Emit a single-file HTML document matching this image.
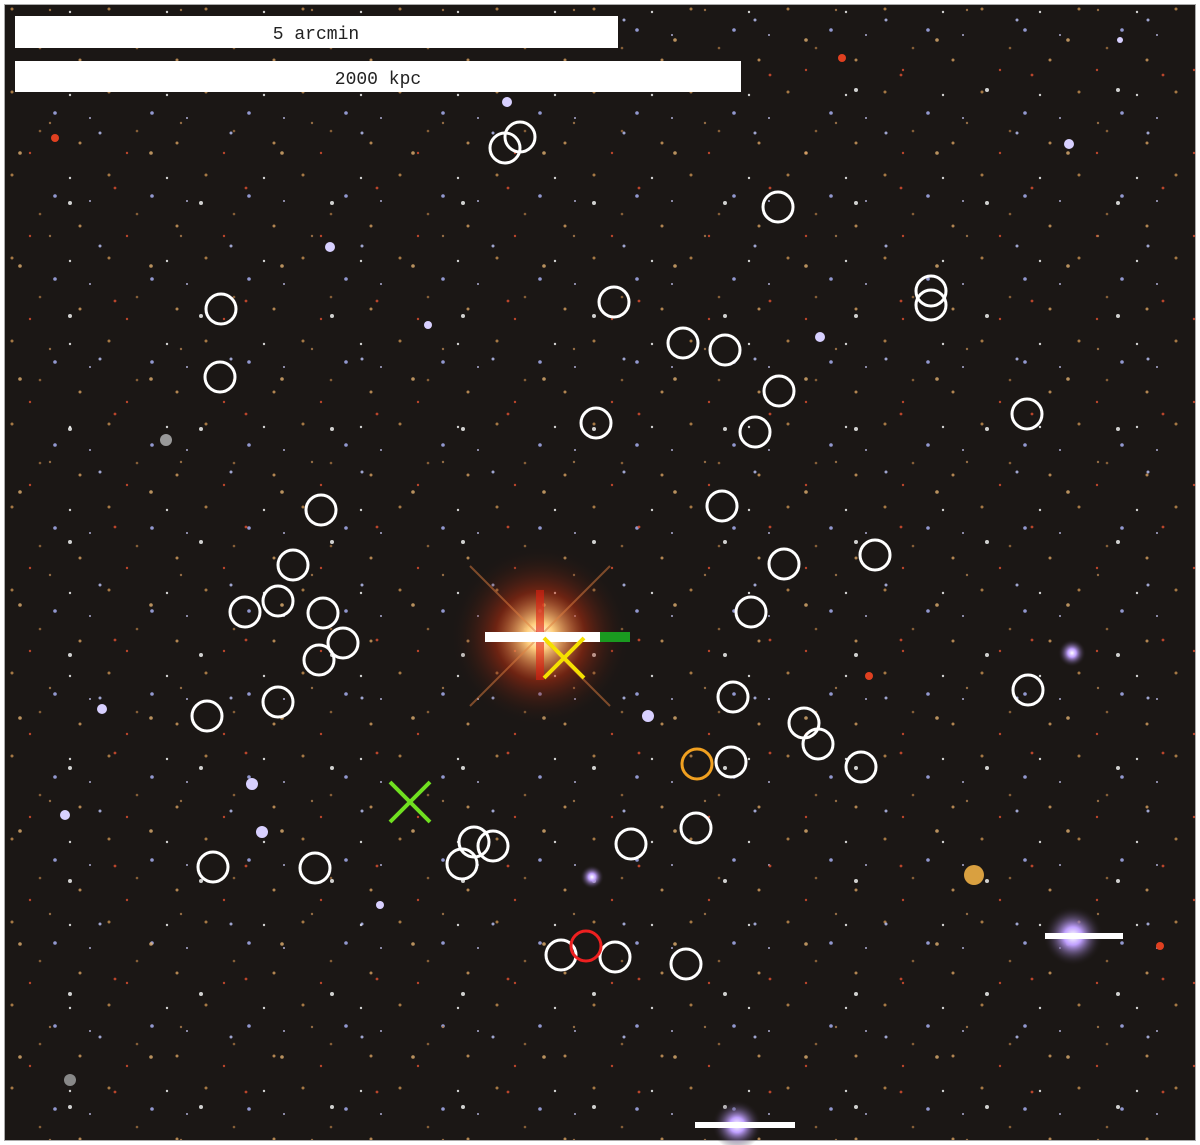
<!DOCTYPE html>
<html><head><meta charset="utf-8"><style>
html,body{margin:0;padding:0;background:#fff;width:1200px;height:1145px;overflow:hidden}
svg{position:absolute;left:0;top:0}
</style></head><body>
<svg width="1200" height="1145" viewBox="0 0 1200 1145" xmlns="http://www.w3.org/2000/svg">
<defs>
<radialGradient id="glow"><stop offset="0" stop-color="#fff"/><stop offset="0.15" stop-color="#ffd080"/><stop offset="0.5" stop-color="#c03010" stop-opacity="0.5"/><stop offset="1" stop-color="#1a1614" stop-opacity="0"/></radialGradient>
<radialGradient id="g2"><stop offset="0" stop-color="#fff"/><stop offset="0.3" stop-color="#c0a0ff"/><stop offset="1" stop-color="#1a1614" stop-opacity="0"/></radialGradient>
<pattern id="p1" width="97" height="83" patternUnits="userSpaceOnUse">
<circle cx="12" cy="9" r="1.5" fill="#c89050"/><circle cx="55" cy="30" r="1.8" fill="#b0b8ff"/><circle cx="80" cy="60" r="1.5" fill="#d8a060"/><circle cx="30" cy="70" r="1.2" fill="#e05030"/><circle cx="70" cy="12" r="1.2" fill="#fff"/><circle cx="40" cy="48" r="1.3" fill="#a07040"/><circle cx="90" cy="35" r="1" fill="#d0d0ff"/>
</pattern>
<pattern id="p2" width="131" height="113" patternUnits="userSpaceOnUse">
<circle cx="20" cy="40" r="1.8" fill="#e0b070"/><circle cx="100" cy="20" r="1.5" fill="#c0c8ff"/><circle cx="70" cy="90" r="2" fill="#ffffff"/><circle cx="115" cy="75" r="1.4" fill="#e05030"/><circle cx="50" cy="10" r="1.2" fill="#b08050"/>
</pattern>
</defs>
<rect x="4" y="4" width="1192" height="1137" fill="#aaa"/>
<rect x="5" y="5" width="1190" height="1135" fill="#1b1715"/>
<rect x="5" y="5" width="1190" height="1135" fill="url(#p1)" opacity="0.8"/>
<rect x="5" y="5" width="1190" height="1135" fill="url(#p2)" opacity="0.8"/>
<circle cx="540" cy="636" r="90" fill="url(#glow)"/>
<path d="M470 566L610 706M610 566L470 706" stroke="#e08040" stroke-width="2" opacity="0.5"/>
<rect x="536" y="590" width="8" height="90" fill="#e02010" opacity="0.6"/>
<rect x="485" y="632" width="145" height="10" fill="#fff"/>
<rect x="600" y="632" width="30" height="10" fill="#1a9a20"/>
<circle cx="1073" cy="936" r="30" fill="url(#g2)"/>
<rect x="1045" y="933" width="78" height="6" fill="#fff"/>
<circle cx="737" cy="1125" r="25" fill="url(#g2)"/>
<rect x="695" y="1122" width="100" height="6" fill="#fff"/>
<circle cx="1072" cy="653" r="14" fill="url(#g2)"/>
<circle cx="592" cy="877" r="12" fill="url(#g2)"/>
<circle cx="974" cy="875" r="10" fill="#d9a040"/>
<g fill="#d8d0ff">
<circle cx="507" cy="102" r="5"/><circle cx="55" cy="138" r="4" fill="#e04020"/><circle cx="1069" cy="144" r="5"/><circle cx="820" cy="337" r="5"/><circle cx="648" cy="716" r="6"/><circle cx="102" cy="709" r="5"/><circle cx="252" cy="784" r="6"/><circle cx="262" cy="832" r="6"/><circle cx="65" cy="815" r="5"/><circle cx="869" cy="676" r="4" fill="#e04020"/><circle cx="842" cy="58" r="4" fill="#e04020"/><circle cx="166" cy="440" r="6" fill="#999"/><circle cx="1160" cy="946" r="4" fill="#e04020"/><circle cx="70" cy="1080" r="6" fill="#888"/><circle cx="330" cy="247" r="5"/><circle cx="428" cy="325" r="4"/><circle cx="1120" cy="40" r="3"/><circle cx="380" cy="905" r="4"/>
</g>
<rect x="15" y="16" width="603" height="32" fill="#fff"/>
<rect x="15" y="61" width="726" height="31" fill="#fff"/>
<text x="316" y="39" font-family="Liberation Mono, monospace" font-size="18" text-anchor="middle" fill="#222">5 arcmin</text>
<text x="378" y="84" font-family="Liberation Mono, monospace" font-size="18" text-anchor="middle" fill="#222">2000 kpc</text>
<g fill="none" stroke="#fff" stroke-width="3">
<circle cx="505" cy="148" r="15"/><circle cx="520" cy="137" r="15"/><circle cx="778" cy="207" r="15"/><circle cx="221" cy="309" r="15"/><circle cx="614" cy="302" r="15"/><circle cx="931" cy="291" r="15"/><circle cx="931" cy="305" r="15"/><circle cx="683" cy="343" r="15"/><circle cx="725" cy="350" r="15"/><circle cx="220" cy="377" r="15"/><circle cx="779" cy="391" r="15"/><circle cx="1027" cy="414" r="15"/><circle cx="596" cy="423" r="15"/><circle cx="755" cy="432" r="15"/><circle cx="321" cy="510" r="15"/><circle cx="722" cy="506" r="15"/><circle cx="875" cy="555" r="15"/><circle cx="784" cy="564" r="15"/><circle cx="293" cy="565" r="15"/><circle cx="278" cy="601" r="15"/><circle cx="245" cy="612" r="15"/><circle cx="323" cy="613" r="15"/><circle cx="343" cy="643" r="15"/><circle cx="319" cy="660" r="15"/><circle cx="751" cy="612" r="15"/><circle cx="1028" cy="690" r="15"/><circle cx="733" cy="697" r="15"/><circle cx="278" cy="702" r="15"/><circle cx="207" cy="716" r="15"/><circle cx="804" cy="723" r="15"/><circle cx="818" cy="744" r="15"/><circle cx="731" cy="762" r="15"/><circle cx="861" cy="767" r="15"/><circle cx="696" cy="828" r="15"/><circle cx="631" cy="844" r="15"/><circle cx="474" cy="842" r="15"/><circle cx="493" cy="846" r="15"/><circle cx="462" cy="864" r="15"/><circle cx="213" cy="867" r="15"/><circle cx="315" cy="868" r="15"/><circle cx="561" cy="955" r="15"/><circle cx="615" cy="957" r="15"/><circle cx="686" cy="964" r="15"/>
</g>
<circle cx="697" cy="764" r="15" fill="none" stroke="#f0a020" stroke-width="3"/>
<circle cx="586" cy="946" r="15" fill="none" stroke="#ee2020" stroke-width="3"/>
<path d="M544 638L584 678M584 638L544 678" stroke="#f5e000" stroke-width="4"/>
<path d="M390 782L430 822M430 782L390 822" stroke="#70e020" stroke-width="4"/>
</svg>
</body></html>
